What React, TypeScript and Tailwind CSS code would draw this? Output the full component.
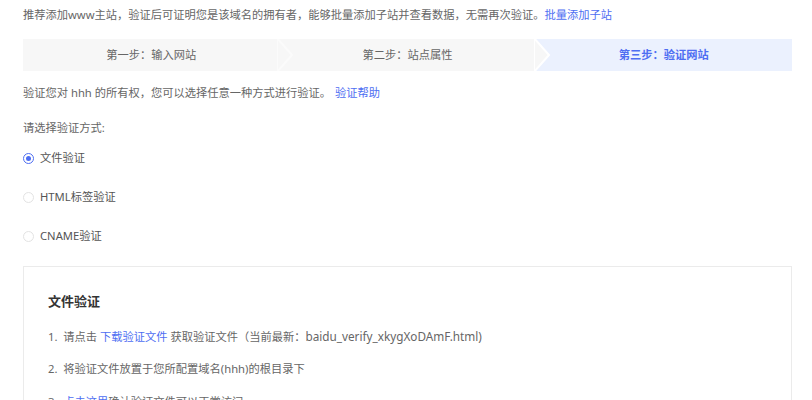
import React from "react";

const Radio = ({ checked, label }: { checked?: boolean; label: string }) => (
  <div className="flex h-[22px] items-center gap-[6px]">
    <span
      className={
        checked
          ? "flex h-[11px] w-[11px] items-center justify-center rounded-full border border-[#4e6ef2] bg-white"
          : "flex h-[11px] w-[11px] items-center justify-center rounded-full border border-[#e3e3e3] bg-white"
      }
    >
      {checked && <span className="h-[5px] w-[5px] rounded-full bg-[#4e6ef2]" />}
    </span>
    <span className="text-[#555]">{label}</span>
  </div>
);

const Chevron = ({ fill, stroke }: { fill: string; stroke: string }) => (
  <svg
    className="absolute right-[-15px] top-0 z-10"
    width="17"
    height="32"
    viewBox="0 0 17 32"
  >
    <polygon points="0,-1 15,16 0,33" fill={fill} stroke={stroke} strokeWidth="2" />
  </svg>
);

export default function App() {
  return (
    <div className="h-[400px] w-[812px] overflow-hidden bg-white pl-[23px] pr-[20px] font-['Noto_Sans','Noto_Sans_CJK_SC',sans-serif] text-[11.25px] leading-[22px] text-[#666]">
      <div className="flex h-[30px] items-center">
        <span>推荐添加www主站，验证后可证明您是该域名的拥有者，能够批量添加子站并查看数据，无需再次验证。</span>
        <span className="text-[#4e6ef2]">批量添加子站</span>
      </div>

      <div className="mt-[9px] flex h-[32px] overflow-hidden">
        <div className="relative flex flex-1 items-center justify-center bg-[#f7f7f7] text-[#666]">
          第一步：输入网站
          <Chevron fill="#f7f7f7" stroke="#fbfbfb" />
        </div>
        <div className="relative flex flex-1 items-center justify-center bg-[#f7f7f7] text-[#666]">
          第二步：站点属性
          <Chevron fill="#f7f7f7" stroke="#ffffff" />
        </div>
        <div className="flex flex-1 items-center justify-center bg-[#ebf1fe] font-bold text-[#4e6ef2]">
          第三步：验证网站
        </div>
      </div>

      <div className="mt-[11px] flex h-[22px] items-center">
        <span>验证您对 hhh 的所有权，您可以选择任意一种方式进行验证。</span>
        <span className="ml-[4px] text-[#4e6ef2]">验证帮助</span>
      </div>

      <div className="mt-[13px] h-[22px]">请选择验证方式:</div>

      <div className="mt-[8px]">
        <Radio checked label="文件验证" />
      </div>
      <div className="mt-[17px]">
        <Radio label="HTML标签验证" />
      </div>
      <div className="mt-[17px]">
        <Radio label="CNAME验证" />
      </div>

      <div className="mt-[19px] h-[200px] border border-[#ebebeb] pl-[24px] pt-[23px]">
        <div className="h-[22px] text-[13px] font-bold text-[#333]">文件验证</div>
        <div className="mt-[13px] h-[22px]">
          1.&nbsp; 请点击 <span className="text-[#4e6ef2]">下载验证文件</span> 获取验证文件（当前最新：<span className="text-[11.75px]">baidu_verify_xkygXoDAmF.html)</span>
        </div>
        <div className="mt-[11px] h-[22px]">2.&nbsp; 将验证文件放置于您所配置域名(hhh)的根目录下</div>
        <div className="mt-[11px] h-[22px]">
          3.&nbsp; <span className="text-[#4e6ef2]">点击这里</span>确认验证文件可以正常访问
        </div>
      </div>
    </div>
  );
}
